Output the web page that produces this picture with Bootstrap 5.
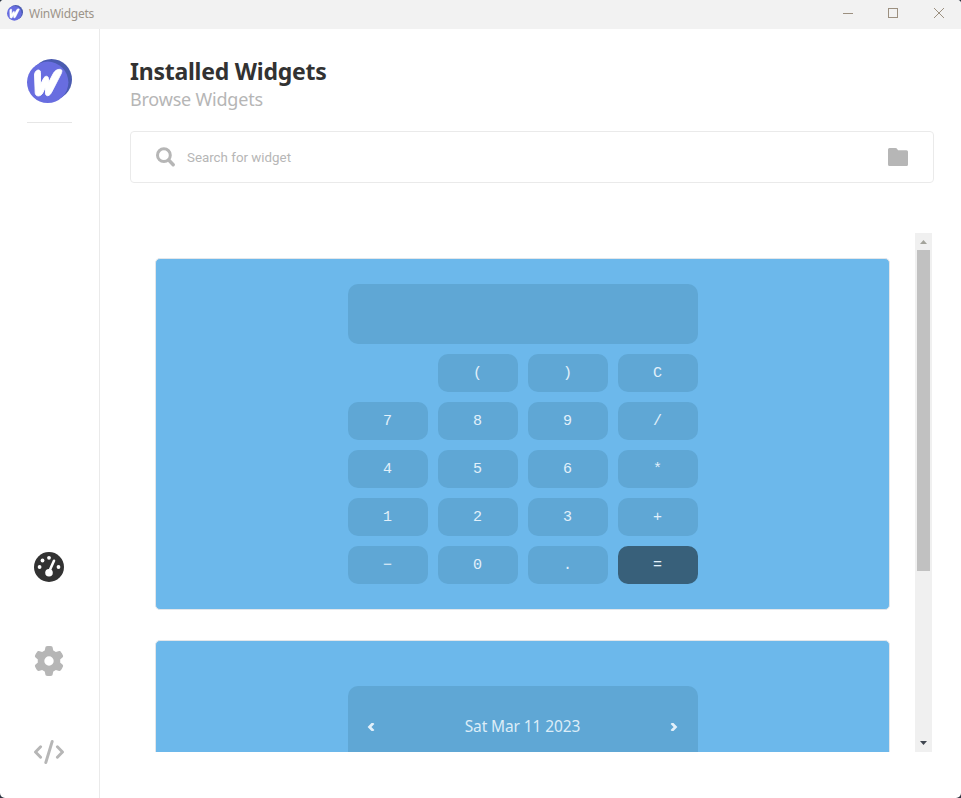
<!DOCTYPE html>
<html lang="en">
<head>
<meta charset="utf-8">
<meta name="viewport" content="width=device-width, initial-scale=1">
<title>WinWidgets</title>
<link href="https://cdn.jsdelivr.net/npm/bootstrap@5.3.0/dist/css/bootstrap.min.css" rel="stylesheet">
<style>
  html, body { height: 100%; }
  body { background: #2c3440; font-family: "Noto Sans", "Open Sans", sans-serif; overflow: hidden; }
  svg { display: block; flex: none; }
  .app-window { height: 798px; background: #fff; border-radius: 4px 4px 5px 5px; }
  .title-strip { height: 29px; background: #f2f2f2; color: #9c9489; padding-left: 7px; flex: none; }
  .title-logo { margin-top: 5px; }
  .title-text { font-size: 12px; line-height: 16px; letter-spacing: -.25px; margin-left: 6px; margin-top: 6px; }
  .win-controls { margin-right: -1px; }
  .win-btn { width: 45.5px; height: 26px; }
  .side-rail { width: 100px; border-right: 1px solid #eaeaea; padding: 30px 0 34px; flex: none; }
  .rail-line { width: 45px; height: 1px; background: #e6e6e6; margin-top: 18px; }
  .rail-icons { gap: 64px; margin-right: 1px; }
  .main-pane { padding: 28px 27px 0 30px; min-width: 0; }
  .page-title { font-size: 23px; line-height: 28px; font-weight: 700; color: #323232; letter-spacing: -.24px; }
  .page-sub { font-size: 18px; line-height: 26px; color: #b6b6b6; letter-spacing: -.2px; margin-top: 1px; }
  .search-box { height: 52px; border: 1px solid #eaeaea; border-radius: 4px; padding: 0 25px; margin-top: 19px; }
  .search-input, .search-input:focus { font-family: Roboto, sans-serif; font-size: 13.33px; padding: 2px 0 0 12px; color: #555; line-height: 18px; }
  .search-input::placeholder { color: #b6b6b6; opacity: 1; }
  .list-area { height: 519px; margin: 50px 2px 0 0; }
  .card-col { padding: 25px 25px 0; gap: 30px; }
  .widget-card { border: 1px solid #e2e6ea; border-radius: 5px; background: #6cb8eb; height: 352px; flex: none; }
  .keypad { display: grid; grid-template-columns: repeat(4, 80px); gap: 10px; width: 350px; margin: 25px 0 0 1px; }
  .screen { grid-column: 1 / -1; height: 60px; background: #5fa7d5; border-radius: 10px; }
  .key { height: 38px; background: #5fa7d5; border-radius: 10px; border: 0; padding: 2px 1px 0 0; color: #e2f0fa; font: 15px/36px "Liberation Mono", monospace; text-align: center; }
  .key-eq { background: #38607a; }
  .calendar { width: 350px; height: 300px; background: #5fa7d5; border-radius: 10px; margin: 45px 0 0 1px; padding: 29px 20px 0 19px; color: #dcedf8; font-size: 15.5px; line-height: 24px; }
  .calendar-date { letter-spacing: -.1px; margin-top: -1px; }
  .scroll-track { width: 17px; background: #f0f0f0; flex: none; }
  .scroll-thumb { width: 13px; height: 321px; background: #c1c1c1; }
</style>
<script src="https://cdn.jsdelivr.net/npm/bootstrap@5.3.0/dist/js/bootstrap.bundle.min.js"></script>
</head>
<body>
<svg width="0" height="0" class="position-absolute">
  <defs>
    <symbol id="logo" viewBox="0 0 45 45">
      <circle cx="24.500" cy="20.500" r="20.500" fill="#4a5bb0"/>
      <circle cx="20.700" cy="23.300" r="20.700" fill="#686de0"/>
      <path d="M7.500 16c0-5 6-7 6-2.500v12l3-6c1.500-3 4.500-3 5 0v4l4.500-8.500c2.500-4.500 5.500-4.800 7.500-4.600 2 .3 1.500 2.500.5 4.600l-9.500 18.500c-2 4-6 4.500-6 .5v-6l-2.500 5.500c-2 4.500-7.500 4.500-7.800.5z" fill="#fff" stroke="#fff" stroke-width=".9" stroke-linejoin="round"/>
    </symbol>
  </defs>
</svg>
<div class="app-window d-flex flex-column overflow-hidden">
  <header class="title-strip d-flex align-items-start">
    <svg width="16" height="16" class="title-logo"><use href="#logo"/></svg>
    <span class="title-text">WinWidgets</span>
    <div class="win-controls d-flex ms-auto">
      <span class="win-btn d-flex align-items-center justify-content-center"><svg width="12" height="12" stroke="#9c9080"><path d="M1 6.500h10"/></svg></span>
      <span class="win-btn d-flex align-items-center justify-content-center"><svg width="12" height="12" fill="none" stroke="#9c9080"><rect x=".5" y="1.500" width="9" height="9"/></svg></span>
      <span class="win-btn d-flex align-items-center justify-content-center"><svg width="12" height="12" stroke="#9c9080"><path d="M1 1l10 10M11 1L1 11"/></svg></span>
    </div>
  </header>
  <div class="d-flex flex-grow-1">
    <nav class="side-rail d-flex flex-column align-items-center">
      <svg width="45" height="45"><use href="#logo"/></svg>
      <div class="rail-line"></div>
      <div class="rail-icons mt-auto d-flex flex-column align-items-center">
        <svg width="30" height="30" viewBox="0 0 30 30">
          <circle cx="15" cy="15" r="15" fill="#323232"/>
          <g fill="#fff"><circle cx="5.600" cy="15" r="1.900"/><circle cx="8.500" cy="8.500" r="1.900"/><circle cx="15" cy="5.800" r="1.900"/><circle cx="24.500" cy="15" r="1.900"/><circle cx="15" cy="20.700" r="3.800"/></g>
          <path d="M15.200 19.500L20 8.800" stroke="#fff" stroke-width="2.600" stroke-linecap="round"/>
        </svg>
        <svg width="30" height="30" viewBox="0 0 512 512" fill="#b6b6b6"><path d="M495.900 166.600c3.200 8.700.5 18.400-6.400 24.600l-43.300 39.400c1.100 8.300 1.700 16.800 1.700 25.400s-.6 17.100-1.700 25.400l43.300 39.400c6.900 6.200 9.600 15.900 6.400 24.600-4.400 11.900-9.700 23.300-15.800 34.300l-4.700 8.100c-6.600 11-14 21.400-22.100 31.200-5.900 7.200-15.700 9.600-24.500 6.800l-55.700-17.700c-13.400 10.300-28.200 18.900-44 25.400l-12.500 57.100c-2 9.100-9 16.300-18.200 17.800-13.800 2.300-28 3.500-42.500 3.500s-28.700-1.200-42.500-3.500c-9.200-1.500-16.200-8.700-18.200-17.800l-12.500-57.100c-15.800-6.500-30.600-15.100-44-25.400L83.100 425.900c-8.800 2.800-18.600.3-24.500-6.800-8.100-9.800-15.500-20.200-22.100-31.200l-4.700-8.100c-6.100-11-11.400-22.400-15.800-34.300-3.200-8.700-.5-18.400 6.400-24.600l43.300-39.400C64.600 273.100 64 264.600 64 256s.6-17.100 1.700-25.400L22.400 191.200c-6.900-6.200-9.600-15.900-6.400-24.600 4.400-11.900 9.700-23.300 15.800-34.300l4.700-8.100c6.600-11 14-21.400 22.100-31.200 5.900-7.200 15.700-9.600 24.500-6.800l55.700 17.700c13.400-10.300 28.200-18.900 44-25.400l12.500-57.100c2-9.100 9-16.300 18.200-17.800C227.300 1.200 241.500 0 256 0s28.700 1.200 42.500 3.500c9.200 1.500 16.200 8.700 18.200 17.800l12.500 57.100c15.800 6.500 30.600 15.100 44 25.400l55.700-17.700c8.800-2.800 18.600-.3 24.500 6.800 8.100 9.800 15.500 20.200 22.100 31.200l4.700 8.100c6.100 11 11.400 22.400 15.800 34.300zM256 336a80 80 0 1 0 0-160 80 80 0 1 0 0 160z"/></svg>
        <svg width="30" height="24" viewBox="0 0 30 24" fill="none" stroke="#b6b6b6" stroke-width="2.900" stroke-linecap="round" stroke-linejoin="round"><path d="M6.600 6.800L1.500 12l5.100 5.200M23.400 6.800l5.100 5.200-5.100 5.200M18.200 1.500L11.800 22.500"/></svg>
      </div>
    </nav>
    <main class="main-pane flex-grow-1">
      <h1 class="page-title m-0">Installed Widgets</h1>
      <div class="page-sub">Browse Widgets</div>
      <div class="search-box d-flex align-items-center">
        <svg width="19" height="20" viewBox="0 0 19 20" fill="none" stroke="#b6b6b6"><circle cx="7.900" cy="8.200" r="6.400" stroke-width="3"/><path d="M12.700 13l4.500 4.700" stroke-width="3.400" stroke-linecap="round"/></svg>
        <input class="search-input form-control border-0 shadow-none bg-transparent" type="text" placeholder="Search for widget">
        <svg width="20" height="18" viewBox="0 0 20 18" fill="#b6b6b6"><path d="M1.500 0h6c.6 0 1 .2 1.400.6L10 2.200h8.500a1.500 1.500 0 0 1 1.500 1.500V16.500a1.500 1.500 0 0 1-1.500 1.500h-17a1.500 1.500 0 0 1-1.500-1.500v-15a1.500 1.500 0 0 1 1.500-1.500z"/></svg>
      </div>
      <div class="list-area d-flex overflow-hidden">
        <div class="card-col flex-grow-1 d-flex flex-column">
          <section class="widget-card d-flex justify-content-center align-items-start">
            <div class="keypad">
              <div class="screen"></div>
              <span></span>
              <button class="key">(</button><button class="key">)</button><button class="key">C</button>
              <button class="key">7</button><button class="key">8</button><button class="key">9</button><button class="key">/</button>
              <button class="key">4</button><button class="key">5</button><button class="key">6</button><button class="key">*</button>
              <button class="key">1</button><button class="key">2</button><button class="key">3</button><button class="key">+</button>
              <button class="key">−</button><button class="key">0</button><button class="key">.</button><button class="key key-eq">=</button>
            </div>
          </section>
          <section class="widget-card d-flex justify-content-center align-items-start">
            <div class="calendar">
              <div class="d-flex justify-content-between align-items-center">
                <svg width="8" height="8" viewBox="0 0 8 8" fill="none" stroke="#e2f0fa" stroke-width="2.700"><path d="M6.400 0L2.500 4l3.900 4"/></svg>
                <span class="calendar-date">Sat Mar 11 2023</span>
                <svg width="8" height="8" viewBox="0 0 8 8" fill="none" stroke="#e2f0fa" stroke-width="2.700"><path d="M1.600 0l3.900 4-3.900 4"/></svg>
              </div>
            </div>
          </section>
        </div>
        <div class="scroll-track d-flex flex-column align-items-center">
          <svg width="17" height="17" fill="#a3a39b"><path d="M5 11h7L8.500 7z"/></svg>
          <div class="scroll-thumb"></div>
          <svg width="17" height="17" class="mt-auto" fill="#404650"><path d="M5 6h7l-3.500 4z"/></svg>
        </div>
      </div>
    </main>
  </div>
</div>
</body>
</html>
